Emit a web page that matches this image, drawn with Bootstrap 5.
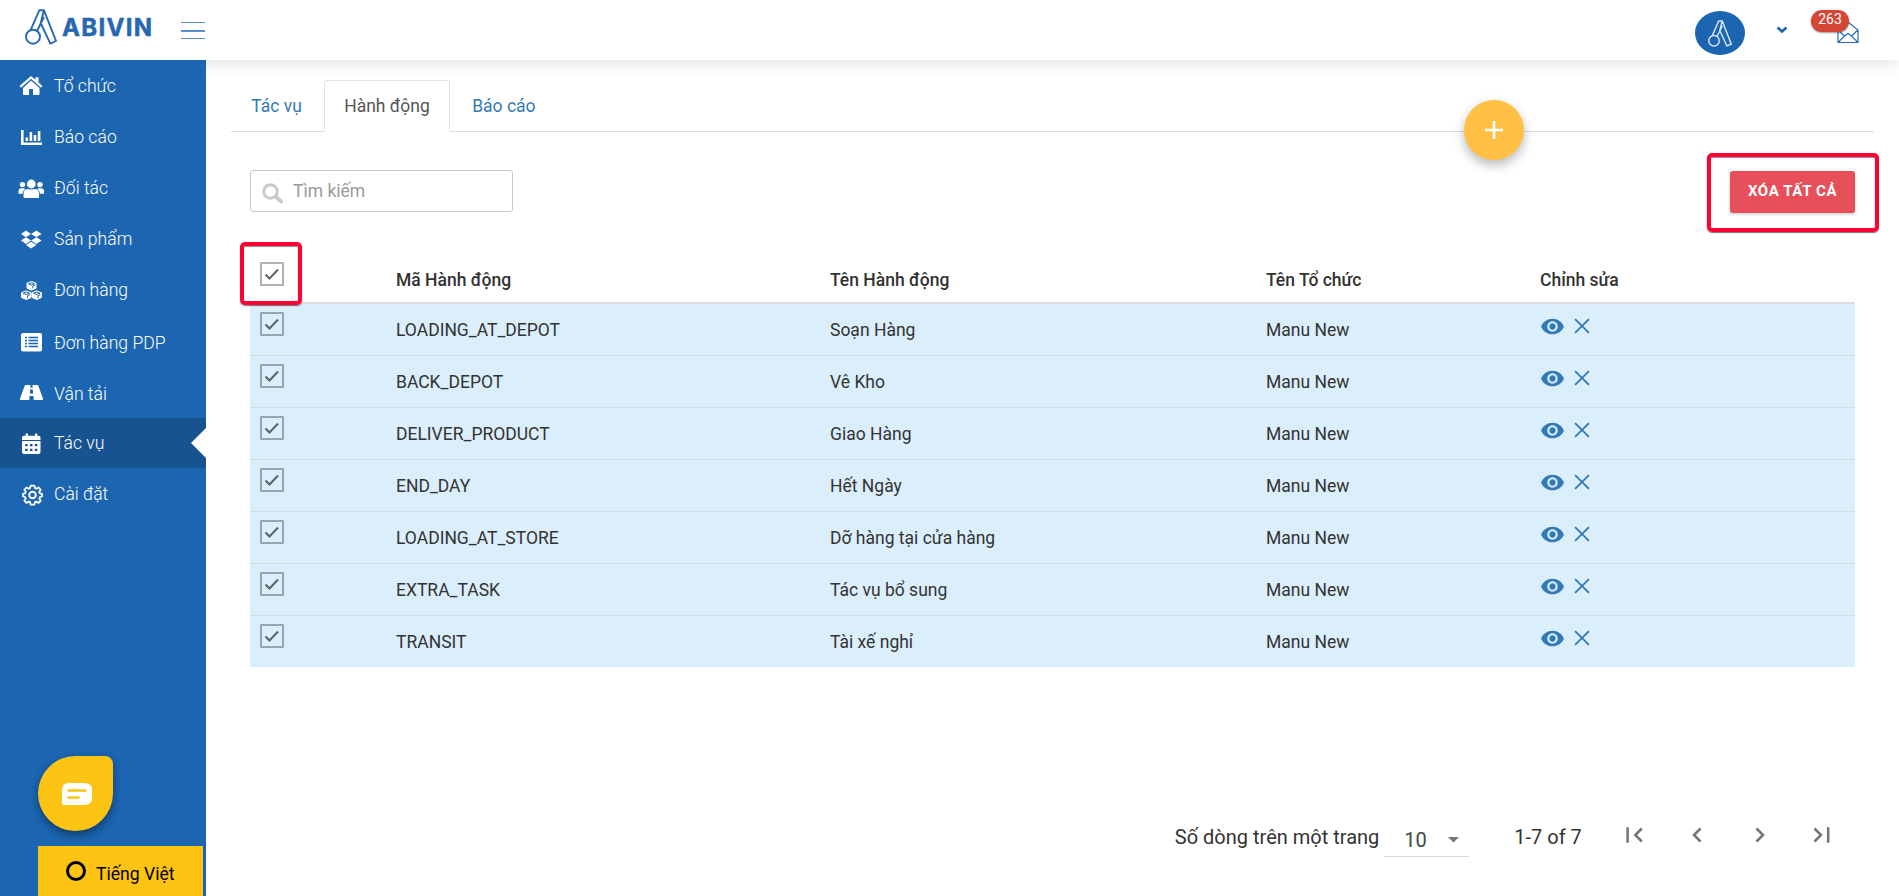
<!DOCTYPE html>
<html lang="vi">
<head>
<meta charset="utf-8">
<meta name="viewport" content="width=device-width, initial-scale=1">
<title>Abivin - Hành động</title>
<link rel="stylesheet" href="https://cdn.jsdelivr.net/npm/bootstrap@5.3.0/dist/css/bootstrap.min.css">
<style>
  body { font-family: Roboto, "Noto Sans", sans-serif; font-size: 17.5px; color: #333; background: #fff; }
  svg { display: block; flex: none; }
  .topbar { height: 60px; box-shadow: 0 0 20px rgba(0,0,0,.16); background: #fff; z-index: 3; }
  .brand-logo { margin: 9px 0 0 25px; }
  .burger { width: 24px; height: 17px; margin: 22px 0 0 29px; border-top: 1px solid #5b93cd; border-bottom: 1px solid #5b93cd; }
  .burger span { display: block; height: 2px; margin-top: 7px; background: #5b93cd; }
  .avatar { width: 50px; height: 44px; border-radius: 50%; background: #1b65b1; margin-top: 11px; }
  .chev { margin: 26px 0 0 31px; }
  .mail { margin: 21px 40px 0 49px; }
  .mail .count { left: -26px; top: -11px; width: 38px; height: 22px; border-radius: 11px; background: #d64635; font-size: 14px; line-height: 19px; box-shadow: 0 1px 2px rgba(0,0,0,.4); }
  .shell { height: 836px; }
  .sidebar { width: 206px; background: #1b65b1; z-index: 4; }
  .side-link { height: 50px; margin-top: 1px; padding: 1px 0 0 18px; color: #fff; font-size: 17.6px; font-weight: 300; text-decoration: none; }
  .side-link:first-child { height: 49px; margin-bottom: 2px; }
  .side-link:first-child svg { margin-top: -2px; }
  .side-link svg { width: 26px; height: 22px; margin-right: 10px; fill: #fff; }
  .side-link.on { background: #175390; }
  .side-link.on::after { content: ""; position: absolute; right: 0; top: 10px; border: 15px solid transparent; border-left: 0; border-right-color: #fff; }
  .chat { left: 38px; top: 696px; width: 75px; height: 75px; padding-left: 2px; background: #fdc414; border-radius: 50% 8px 50% 50%; box-shadow: 0 4px 8px rgba(0,0,0,.4); }
  .lang { left: 38px; bottom: 0; width: 165px; height: 50px; background: #fdc414; color: #000; font-size: 17.6px; padding-left: 28px; }
  .lang i { width: 20px; height: 20px; border: 3px solid #000; border-radius: 50%; margin-right: 10px; }
  .lang span { padding-top: 6px; }
  main { padding: 20px 25px 0 25px; }
  .nav-tabs { --bs-nav-tabs-border-color: #ddd; height: 52px; }
  .nav-tabs .nav-link { height: 52px; padding: 0 19.2px; line-height: 50px; color: #337ab7; margin-right: 2px; border-radius: 3px 3px 0 0; }
  .nav-tabs .nav-link.active { color: #555; }
  .fab { left: 1258px; top: 40px; width: 60px; height: 60px; border-radius: 50%; background: #ffc043; box-shadow: 0 5px 12px rgba(0,0,0,.28); }
  .panel { padding: 38px 19px 0; }
  .search-box { width: 263px; height: 42px; border: 1px solid #c8c8c8; border-radius: 3px; color: #999; padding-left: 11px; }
  .search-box span { margin: 1px 0 0 10px; }
  .btn-wipe { width: 125px; height: 42px; margin-top: 1px; padding: 0 0 2px; border: 0; border-radius: 3px; background: #e7505a; color: #fff; font-size: 15px; font-weight: 700; letter-spacing: .6px; box-shadow: 0 1px 3px rgba(0,0,0,.25); }
  .frame { border: 4px solid #ff0035; border-radius: 5px; box-shadow: 0 1px 1px rgba(0,0,0,.55), inset 0 1px 1px rgba(0,0,0,.45); pointer-events: none; }
  .frame-btn { left: -23px; top: -17px; width: 172px; height: 79px; }
  .frame-check { left: -10px; top: -9px; width: 62px; height: 63px; }
  .head-cell { padding-top: 11px; }
  .data-grid { margin-top: 38px; border-collapse: separate; border-spacing: 0; table-layout: fixed; width: 1605px; }
  .data-grid th { height: 53px; padding: 6px 0 0; line-height: 24px; font-weight: 500; border-bottom: 2px solid #ddd; }
  .data-grid td { height: 52px; padding: 0; background: #dbeefc; border-top: 1px solid #d3dbe1; line-height: 24px; }
  .data-grid tr:first-child td { border-top: 0; height: 51px; }
  .box { width: 24px; height: 24px; border: 2px solid rgba(0,0,0,.3); margin-left: 10px; }
  td .box { margin-top: 8px; }
  .acts { margin: 14px 0 0 1px; gap: 10px; color: #337ab7; }
  .pager { margin: 141px 41px 0 0; font-size: 20px; height: 58px; }
  .size-pick { width: 85px; height: 39px; border-bottom: 1px solid #d8d8d8; margin: 0 45px 0 5px; padding: 6px 10px 0 20px; color: #444; }
  .total { margin-right: 44px; }
  .pg { width: 62.4px; }
  .pg-row svg { fill: none; stroke: #757575; stroke-width: 2.5; }
</style>
</head>
<body class="overflow-hidden">
<svg width="0" height="0" class="position-absolute">
  <symbol id="mark-a" viewBox="0 0 32 36"><g fill="none" stroke="currentColor" stroke-width="1.9" stroke-linejoin="round"><circle cx="8" cy="27.700" r="7"/><path d="M5.700 20.800 14.300 1.300H19L31 32l-5.700 2.600L15.700 14M19 1.300 15.700 14M19 8l-7 14"/></g></symbol>
  <symbol id="i-tick" viewBox="0 0 20 20"><path d="M3.500 10.500 7.500 14.500 16 5.500" fill="none" stroke="#5f6368" stroke-width="2"/></symbol>
  <symbol id="i-eye" viewBox="1 4.500 22 15"><path fill="currentColor" d="M12 4.500C7 4.500 2.730 7.610 1 12c1.730 4.390 6 7.500 11 7.500s9.270-3.110 11-7.500c-1.730-4.390-6-7.500-11-7.500zM12 17c-2.760 0-5-2.240-5-5s2.240-5 5-5 5 2.240 5 5-2.240 5-5 5zm0-8c-1.660 0-3 1.340-3 3s1.340 3 3 3 3-1.340 3-3-1.340-3-3-3z"/></symbol>
  <symbol id="i-x" viewBox="0 0 15 15"><path d="M1 1 14 14M14 1 1 14" fill="none" stroke="currentColor" stroke-width="1.700"/></symbol>
</svg>

<header class="topbar d-flex align-items-start position-relative">
  <svg class="brand-logo" width="127" height="37" color="#2768b3"><use href="#mark-a" width="32" height="36"/><text x="37" y="27" textLength="90" font-family="Inter" font-weight="700" font-size="24" fill="#2768b3" stroke="#2768b3" stroke-width=".5">ABIVIN</text></svg>
  <a class="burger" href="#"><span></span></a>
  <div class="ms-auto d-flex align-items-start">
    <div class="avatar d-flex align-items-center justify-content-center"><svg width="28" height="27" color="#dbe8f6"><use href="#mark-a"/></svg></div>
    <svg class="chev" width="12" height="8"><path d="M1.500 1.500 6 5.500l4.500-4" fill="none" stroke="#1b65b1" stroke-width="2.600"/></svg>
    <div class="mail position-relative">
      <svg width="22" height="23" fill="none" stroke="#2a6db5" stroke-width="1.200"><path d="M1 9 11 1l10 8v12.500H1zM1 9l6.500 6M21 9l-6.500 6M1 21.500 7.500 15l3.500-2.500 3.500 2.500 6.500 6.500"/></svg>
      <span class="count position-absolute text-white text-center">263</span>
    </div>
  </div>
</header>

<div class="shell d-flex">
  <nav class="sidebar position-relative flex-shrink-0">
    <a class="side-link d-flex align-items-center" href="#"><svg viewBox="0 0 26 22"><path d="M13 6.500 21.500 14v6.200q0 .8-.8.8H15v-6h-4v6H5.800q-.8 0-.8-.8V14zM13 2l4.500 3.800V3.200h3V8.500l4 3.500-1.500 1.700L13 4.800 3 13.700 1.500 12z"/></svg>Tổ chức</a>
    <a class="side-link d-flex align-items-center" href="#"><svg viewBox="0 0 26 22"><path d="M3 3h2.600v12.400H24V18H3zM7.500 10.500h2.600v3.500H7.500zM11.600 5h2.600v9h-2.600zM15.700 8h2.600v6h-2.600zM19.800 4h2.600v10h-2.600z"/></svg>Báo cáo</a>
    <a class="side-link d-flex align-items-center" href="#"><svg viewBox="0 0 26 22"><circle cx="4.500" cy="6.600" r="2.700"/><circle cx="22" cy="6.600" r="2.700"/><circle cx="13.300" cy="6" r="4.400"/><path d="M5.500 19v-3q0-5 5-5 2.800 1.200 5.600 0 5 0 5 5v3q0 1-1 1H6.500q-1 0-1-1zM.5 15.700v-2.500q0-2.900 2.900-2.900h2.300q1 0 1.600.6-2.600 1.700-2.900 4.800zM26 15.700v-2.500q0-2.900-2.900-2.900h-2.300q-1 0-1.600.6 2.600 1.700 2.900 4.800z"/></svg>Đối tác</a>
    <a class="side-link d-flex align-items-center" href="#"><svg viewBox="0 0 26 22"><path d="M8 1.500 13 5 8 8.300 3 5zM18.500 1.500l5 3.500-5 3.300L13 5zM8 8.300l5 3.300-5 3.300-5-3.300zM18.500 8.300l5 3.300-5 3.300-5.500-3.300zM8 16l5-3.300L18.500 16 13 19.500z"/></svg>Sản phẩm</a>
    <a class="side-link d-flex align-items-center" href="#"><svg viewBox="0 0 26 22"><g stroke="#fff" stroke-width="1" stroke-linejoin="round"><path d="M13.500 1.500 18 3.200v5l-4.500 1.900L9 8.200v-5zM8.300 10.800l4.700 1.900v4.800l-4.700 2-4.800-2v-4.800zM18.700 10.800l4.700 1.900v4.800l-4.700 2-4.700-2v-4.800z"/></g><path fill="none" stroke="#1b65b1" stroke-width="1" d="M10.500 3.800l3 1.200 3-1.200-3-1.100zM14.800 8.400V6l2.500-1M5 13.200l3.300 1.300 3.200-1.300-3.200-1.200zM15.500 13.200l3.200 1.300 3.300-1.300-3.300-1.200zM9.600 18v-2.400l2.500-1M20 18v-2.400l2.500-1"/></svg>Đơn hàng</a>
    <a class="side-link d-flex align-items-center pt-1" href="#"><svg viewBox="0 0 26 22"><rect x="3" y="1" width="21" height="18.500" rx="2"/><path stroke="#1b65b1" stroke-width="1.500" d="M10.500 5.500h9.500M10.500 8.500h9.500M10.500 11.500h9.500M10.500 14.500h9.500M7 5.500h2M7 8.500h2M7 11.500h2M7 14.500h2"/></svg>Đơn hàng PDP</a>
    <a class="side-link d-flex align-items-center pt-1" href="#"><svg viewBox="0 0 26 22"><path d="M8 2h4.500l-.2 2.500h2.400L14.500 2H19q1 0 1.400 1L25 15.500q.3 1.500-1 1.500h-8.300l-.3-4h-3.800l-.3 4H3q-1.300 0-1-1.500L6.600 3Q7 2 8 2zm4.200 4.500-.3 4h3.200l-.3-4z"/></svg>Vận tải</a>
    <a class="side-link on position-relative d-flex align-items-center" href="#"><svg viewBox="0 0 26 22"><path d="M4 4.500q0-1.700 1.700-1.700h2V.5H10v2.300h7V.5h2.300v2.300h1.700Q22.500 2.800 22.500 4.500V7H4zM4 8h18.500v11q0 2-2 2H6q-2 0-2-2z"/><path fill="#175390" d="M7.200 11h2.500v2.200H7.200zM12 11h2.500v2.200h-2.500zM16.800 11h2.500v2.200h-2.500zM7.200 15.700h2.500v2.200H7.200zM12 15.700h2.500v2.200h-2.500zM16.800 15.700h2.500v2.200h-2.500z"/></svg>Tác vụ</a>
    <a class="side-link d-flex align-items-center" href="#"><svg viewBox="0 0 26 22"><g fill="none" stroke="#fff" stroke-width="1.900" stroke-linejoin="round"><path d="M12.500 1.500h4l.6 2.600 1.500.7 2.300-1.500 2.300 2.500-1.500 2.200.7 1.700 2.200.5v2.700l-2.200.6-.7 1.700 1.500 2.300-2.300 2.300-2.300-1.500-1.500.7-.6 2.600h-4l-.6-2.600-1.500-.7-2.300 1.500-2.300-2.300 1.500-2.300-.7-1.700-2.200-.6v-2.700l2.200-.5.7-1.700-1.500-2.200 2.300-2.500 2.300 1.500 1.500-.7z" transform="translate(.9 .3) scale(.94)"/><circle cx="14.500" cy="11" r="3.300"/></g></svg>Cài đặt</a>
    <div class="chat position-absolute d-flex align-items-center justify-content-center"><svg width="30" height="22"><path fill="#fff" d="M7 0h15q8 0 8 7v8q0 7-8 7H2q-2 0-2-2V7q0-7 7-7z"/><path stroke="#fdc414" stroke-width="2.600" stroke-linecap="round" d="M6.500 7.500h17M6.500 14.500h10"/></svg></div>
    <div class="lang position-absolute d-flex align-items-center"><i></i><span>Tiếng Việt</span></div>
  </nav>

  <main class="flex-grow-1 position-relative">
    <ul class="nav nav-tabs">
      <li class="nav-item"><a class="nav-link" href="#">Tác vụ</a></li>
      <li class="nav-item"><a class="nav-link active" href="#">Hành động</a></li>
      <li class="nav-item"><a class="nav-link" href="#">Báo cáo</a></li>
    </ul>
    <a class="fab position-absolute d-flex align-items-center justify-content-center" href="#"><svg width="18" height="18"><path d="M9 0v18M0 9h18" stroke="#fff" stroke-width="2.600"/></svg></a>
    <div class="panel">
      <div class="d-flex justify-content-between align-items-start">
        <div class="search-box d-flex align-items-center"><svg width="21" height="21" class="mt-1" fill="none" stroke="#c9c9c9"><circle cx="8.500" cy="8.500" r="6.800" stroke-width="3"/><path d="m13.500 13.500 5.500 5" stroke-width="3.800" stroke-linecap="round"/></svg><span>Tìm kiếm</span></div>
        <div class="position-relative"><button class="btn-wipe" type="button">XÓA TẤT CẢ</button><div class="frame frame-btn position-absolute"></div></div>
      </div>
      <table class="data-grid">
        <colgroup><col style="width:146px"><col style="width:434px"><col style="width:436px"><col style="width:274px"><col></colgroup>
        <thead><tr><th class="p-0 align-top"><div class="head-cell position-relative"><div class="box"><svg width="20" height="20"><use href="#i-tick"/></svg></div><div class="frame frame-check position-absolute"></div></div></th><th>Mã Hành động</th><th>Tên Hành động</th><th>Tên Tổ chức</th><th>Chỉnh sửa</th></tr></thead>
        <tbody>
          <tr><td class="align-top"><div class="box"><svg width="20" height="20"><use href="#i-tick"/></svg></div></td><td>LOADING_AT_DEPOT</td><td>Soạn Hàng</td><td>Manu New</td><td class="align-top"><div class="acts d-flex align-items-start"><svg width="23" height="17"><use href="#i-eye"/></svg><svg width="16" height="16"><use href="#i-x"/></svg></div></td></tr>
          <tr><td class="align-top"><div class="box"><svg width="20" height="20"><use href="#i-tick"/></svg></div></td><td>BACK_DEPOT</td><td>Vê Kho</td><td>Manu New</td><td class="align-top"><div class="acts d-flex align-items-start"><svg width="23" height="17"><use href="#i-eye"/></svg><svg width="16" height="16"><use href="#i-x"/></svg></div></td></tr>
          <tr><td class="align-top"><div class="box"><svg width="20" height="20"><use href="#i-tick"/></svg></div></td><td>DELIVER_PRODUCT</td><td>Giao Hàng</td><td>Manu New</td><td class="align-top"><div class="acts d-flex align-items-start"><svg width="23" height="17"><use href="#i-eye"/></svg><svg width="16" height="16"><use href="#i-x"/></svg></div></td></tr>
          <tr><td class="align-top"><div class="box"><svg width="20" height="20"><use href="#i-tick"/></svg></div></td><td>END_DAY</td><td>Hết Ngày</td><td>Manu New</td><td class="align-top"><div class="acts d-flex align-items-start"><svg width="23" height="17"><use href="#i-eye"/></svg><svg width="16" height="16"><use href="#i-x"/></svg></div></td></tr>
          <tr><td class="align-top"><div class="box"><svg width="20" height="20"><use href="#i-tick"/></svg></div></td><td>LOADING_AT_STORE</td><td>Dỡ hàng tại cửa hàng</td><td>Manu New</td><td class="align-top"><div class="acts d-flex align-items-start"><svg width="23" height="17"><use href="#i-eye"/></svg><svg width="16" height="16"><use href="#i-x"/></svg></div></td></tr>
          <tr><td class="align-top"><div class="box"><svg width="20" height="20"><use href="#i-tick"/></svg></div></td><td>EXTRA_TASK</td><td>Tác vụ bổ sung</td><td>Manu New</td><td class="align-top"><div class="acts d-flex align-items-start"><svg width="23" height="17"><use href="#i-eye"/></svg><svg width="16" height="16"><use href="#i-x"/></svg></div></td></tr>
          <tr><td class="align-top"><div class="box"><svg width="20" height="20"><use href="#i-tick"/></svg></div></td><td>TRANSIT</td><td>Tài xế nghỉ</td><td>Manu New</td><td class="align-top"><div class="acts d-flex align-items-start"><svg width="23" height="17"><use href="#i-eye"/></svg><svg width="16" height="16"><use href="#i-x"/></svg></div></td></tr>
        </tbody>
      </table>
    </div>
    <div class="pager d-flex align-items-center justify-content-end">
      <span>Số dòng trên một trang</span>
      <div class="size-pick d-flex justify-content-between align-items-center"><span>10</span><svg width="11" height="6"><path d="M0 0h11L5.500 5.500z" fill="#777"/></svg></div>
      <span class="total">1-7 of 7</span>
      <div class="pg-row d-flex mb-1">
        <a class="pg" href="#"><svg width="20" height="18"><path d="M1.600 1.200v15.600M15.800 2.500 9.300 9l6.500 6.500"/></svg></a>
        <a class="pg" href="#"><svg width="16" height="18"><path d="M12.500 2.500 6 9l6.500 6.500"/></svg></a>
        <a class="pg" href="#"><svg width="16" height="18"><path d="M5.500 2.500 12 9l-6.500 6.500"/></svg></a>
        <a href="#"><svg width="20" height="18"><path d="M15.200 1.200v15.600M1.500 2.500 8 9l-6.500 6.500"/></svg></a>
      </div>
    </div>
  </main>
</div>
<script src="https://cdn.jsdelivr.net/npm/bootstrap@5.3.0/dist/js/bootstrap.bundle.min.js"></script>
</body>
</html>
